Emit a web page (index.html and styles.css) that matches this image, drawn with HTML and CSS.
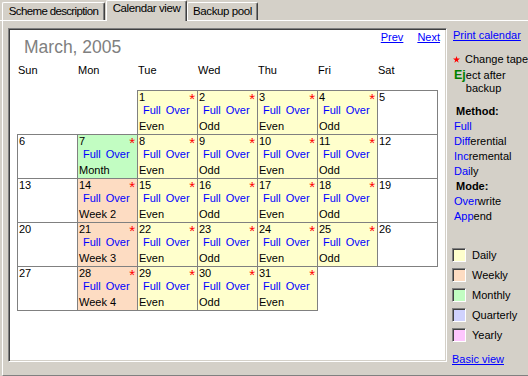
FILE: index.html
```html
<!DOCTYPE html>
<html lang="en">
<head>
    <meta charset="UTF-8">
    <title>Calendar view</title>
    <link rel="stylesheet" href="styles.css">
</head>
<body>
    <div class="tabs">
        <div class="tab tab-scheme">Scheme description</div>
        <div class="tab tab-active">Calendar view</div>
        <div class="tab tab-pool">Backup pool</div>
    </div>

    <div class="page">
        <div class="calendar">
            <div class="cal-top">
                <div class="month">March, 2005</div>
                <div class="cal-nav">
                    <a href="#">Prev</a>
                    <a href="#">Next</a>
                </div>
            </div>

            <div class="weekdays">
                <span>Sun</span><span>Mon</span><span>Tue</span><span>Wed</span><span>Thu</span><span>Fri</span><span>Sat</span>
            </div>

            <div class="days">
                <!-- week 1 -->
                <div class="day blank"></div>
                <div class="day blank"></div>
                <div class="day daily"><div class="day-top">1<span class="tape">*</span></div><div class="day-jobs"><span>Full</span><span>Over</span></div><div class="day-note">Even</div></div>
                <div class="day daily"><div class="day-top">2<span class="tape">*</span></div><div class="day-jobs"><span>Full</span><span>Over</span></div><div class="day-note">Odd</div></div>
                <div class="day daily"><div class="day-top">3<span class="tape">*</span></div><div class="day-jobs"><span>Full</span><span>Over</span></div><div class="day-note">Even</div></div>
                <div class="day daily"><div class="day-top">4<span class="tape">*</span></div><div class="day-jobs"><span>Full</span><span>Over</span></div><div class="day-note">Odd</div></div>
                <div class="day"><div class="day-top">5</div></div>

                <!-- week 2 -->
                <div class="day"><div class="day-top">6</div></div>
                <div class="day monthly"><div class="day-top">7<span class="tape">*</span></div><div class="day-jobs"><span>Full</span><span>Over</span></div><div class="day-note">Month</div></div>
                <div class="day daily"><div class="day-top">8<span class="tape">*</span></div><div class="day-jobs"><span>Full</span><span>Over</span></div><div class="day-note">Even</div></div>
                <div class="day daily"><div class="day-top">9<span class="tape">*</span></div><div class="day-jobs"><span>Full</span><span>Over</span></div><div class="day-note">Odd</div></div>
                <div class="day daily"><div class="day-top">10<span class="tape">*</span></div><div class="day-jobs"><span>Full</span><span>Over</span></div><div class="day-note">Even</div></div>
                <div class="day daily"><div class="day-top">11<span class="tape">*</span></div><div class="day-jobs"><span>Full</span><span>Over</span></div><div class="day-note">Odd</div></div>
                <div class="day"><div class="day-top">12</div></div>

                <!-- week 3 -->
                <div class="day"><div class="day-top">13</div></div>
                <div class="day weekly"><div class="day-top">14<span class="tape">*</span></div><div class="day-jobs"><span>Full</span><span>Over</span></div><div class="day-note">Week 2</div></div>
                <div class="day daily"><div class="day-top">15<span class="tape">*</span></div><div class="day-jobs"><span>Full</span><span>Over</span></div><div class="day-note">Even</div></div>
                <div class="day daily"><div class="day-top">16<span class="tape">*</span></div><div class="day-jobs"><span>Full</span><span>Over</span></div><div class="day-note">Odd</div></div>
                <div class="day daily"><div class="day-top">17<span class="tape">*</span></div><div class="day-jobs"><span>Full</span><span>Over</span></div><div class="day-note">Even</div></div>
                <div class="day daily"><div class="day-top">18<span class="tape">*</span></div><div class="day-jobs"><span>Full</span><span>Over</span></div><div class="day-note">Odd</div></div>
                <div class="day"><div class="day-top">19</div></div>

                <!-- week 4 -->
                <div class="day"><div class="day-top">20</div></div>
                <div class="day weekly"><div class="day-top">21<span class="tape">*</span></div><div class="day-jobs"><span>Full</span><span>Over</span></div><div class="day-note">Week 3</div></div>
                <div class="day daily"><div class="day-top">22<span class="tape">*</span></div><div class="day-jobs"><span>Full</span><span>Over</span></div><div class="day-note">Even</div></div>
                <div class="day daily"><div class="day-top">23<span class="tape">*</span></div><div class="day-jobs"><span>Full</span><span>Over</span></div><div class="day-note">Odd</div></div>
                <div class="day daily"><div class="day-top">24<span class="tape">*</span></div><div class="day-jobs"><span>Full</span><span>Over</span></div><div class="day-note">Even</div></div>
                <div class="day daily"><div class="day-top">25<span class="tape">*</span></div><div class="day-jobs"><span>Full</span><span>Over</span></div><div class="day-note">Odd</div></div>
                <div class="day"><div class="day-top">26</div></div>

                <!-- week 5 -->
                <div class="day"><div class="day-top">27</div></div>
                <div class="day weekly"><div class="day-top">28<span class="tape">*</span></div><div class="day-jobs"><span>Full</span><span>Over</span></div><div class="day-note">Week 4</div></div>
                <div class="day daily"><div class="day-top">29<span class="tape">*</span></div><div class="day-jobs"><span>Full</span><span>Over</span></div><div class="day-note">Even</div></div>
                <div class="day daily"><div class="day-top">30<span class="tape">*</span></div><div class="day-jobs"><span>Full</span><span>Over</span></div><div class="day-note">Odd</div></div>
                <div class="day daily"><div class="day-top">31<span class="tape">*</span></div><div class="day-jobs"><span>Full</span><span>Over</span></div><div class="day-note">Even</div></div>
            </div>
        </div>

        <div class="side">
            <a class="print-link" href="#">Print calendar</a>

            <div class="key-tape">
                <svg width="7" height="7" viewBox="0 0 10 10"><polygon points="5,0 6.2,3.6 10,3.6 6.9,5.9 8.1,9.6 5,7.3 1.9,9.6 3.1,5.9 0,3.6 3.8,3.6" fill="#ff0000"/></svg>
                <span>Change tape</span>
            </div>

            <div class="key-eject">
                <b>Ej</b>
                <span>ect after<br>backup</span>
            </div>

            <div class="key-head">Method:</div>
            <div class="key-item"><span class="hl">Full</span></div>
            <div class="key-item"><span class="hl">Diff</span>erential</div>
            <div class="key-item"><span class="hl">Inc</span>remental</div>
            <div class="key-item"><span class="hl">Dai</span>ly</div>
            <div class="key-head">Mode:</div>
            <div class="key-item"><span class="hl">Over</span>write</div>
            <div class="key-item"><span class="hl">App</span>end</div>

            <div class="legend">
                <div class="legend-row"><span class="swatch daily"></span>Daily</div>
                <div class="legend-row"><span class="swatch weekly"></span>Weekly</div>
                <div class="legend-row"><span class="swatch monthly"></span>Monthly</div>
                <div class="legend-row"><span class="swatch quarterly"></span>Quarterly</div>
                <div class="legend-row"><span class="swatch yearly"></span>Yearly</div>
            </div>

            <a class="basic-link" href="#">Basic view</a>
        </div>
    </div>
</body>
</html>
```

FILE: styles.css
```css
:root {
    --face: #d4d0c8;
    --shadow: #808080;
    --dark: #404040;
    --link: #0000ff;
    --daily: #ffffcc;
    --weekly: #fddcc2;
    --monthly: #c2fdc2;
    --quarterly: #d0d2fd;
    --yearly: #fdc6fd;
}

body {
    margin: 0;
    width: 528px;
    height: 376px;
    overflow: hidden;
    background-color: var(--face);
    font-family: 'Liberation Sans', Arial, sans-serif;
    font-size: 11px;
    color: #000;
}

a {
    color: var(--link);
}

/* tab strip */
.tabs {
    display: flex;
    align-items: flex-end;
    height: 21px;
    box-sizing: border-box;
    padding-left: 2px;
    border-bottom: 1px solid #fff;
}

.tab {
    height: 18px;
    box-sizing: border-box;
    padding-top: 2px;
    font-size: 11.5px;
    line-height: 13px;
    text-align: center;
    letter-spacing: -0.4px;
    border-top: 1px solid #fff;
    border-left: 1px solid #fff;
    border-right: 1px solid var(--dark);
    border-radius: 2px 2px 0 0;
    box-shadow: inset -1px 0 var(--shadow);
    background-color: var(--face);
}

.tab-scheme {
    width: 103px;
    margin-right: 1px;
    letter-spacing: -0.65px;
}

.tab-active {
    width: 81px;
    height: 21px;
    margin-bottom: -1px;
    padding-top: 1px;
}

.tab-pool {
    width: 71px;
}

/* page body */
.page {
    display: flex;
    height: 355px;
    box-sizing: border-box;
    margin-left: 2px;
    padding: 7px 0 0 5px;
    border-left: 1px solid #fff;
    border-bottom: 1px solid var(--shadow);
}

.calendar {
    width: 439px;
    height: 334px;
    box-sizing: border-box;
    padding: 1px;
    background: #fff;
    border: 1px solid;
    border-color: var(--shadow) #fff #fff var(--shadow);
    box-shadow: inset 1px 1px var(--dark), inset -1px -1px var(--face);
}

.cal-top {
    display: flex;
    justify-content: space-between;
    align-items: flex-start;
    padding: 1px 5px 0 14px;
}

.month {
    margin-top: 6px;
    font-size: 17.5px;
    line-height: 20px;
    color: var(--shadow);
}

.cal-nav {
    display: flex;
    gap: 14px;
    line-height: 13px;
}

.weekdays {
    display: grid;
    grid-template-columns: repeat(7, 60px);
    margin: 7px 0 0 7px;
    line-height: 13px;
}

.weekdays span {
    padding-left: 1px;
}

.days {
    display: grid;
    grid-template-columns: repeat(7, 60px);
    grid-auto-rows: 44px;
    margin: 13px 0 0 7px;
}

.day {
    width: 61px;
    height: 45px;
    box-sizing: border-box;
    border: 1px solid var(--shadow);
    background: #fff;
}

.day.blank {
    border: none;
    background: none;
}

.day.daily { background: var(--daily); }
.day.weekly { background: var(--weekly); }
.day.monthly { background: var(--monthly); }

.day-top {
    display: flex;
    justify-content: space-between;
    padding: 0 2px 0 1px;
    height: 12px;
    line-height: 12px;
}

.tape {
    color: #ff0000;
    font-size: 15px;
    line-height: 15px;
}

.day-jobs {
    padding-left: 5px;
    line-height: 15px;
    color: var(--link);
}

.day-jobs span + span {
    margin-left: 5px;
}

.day-note {
    padding-left: 1px;
    line-height: 16px;
}

/* right column */
.side {
    display: flex;
    flex-direction: column;
    align-items: flex-start;
    padding: 1px 0 0 5px;
    white-space: nowrap;
}

.print-link {
    margin-left: 1px;
    line-height: 13px;
}

.key-tape {
    display: flex;
    align-items: center;
    gap: 5px;
    margin-top: 10px;
    line-height: 15px;
}

.key-tape svg {
    margin-left: 1px;
}

.key-eject {
    display: flex;
    margin-top: 2px;
    padding-left: 2px;
    line-height: 13px;
}

.key-eject b {
    color: #008000;
    font-size: 12.5px;
}

.key-head {
    padding-left: 4px;
    font-weight: bold;
    line-height: 15px;
}

.key-eject + .key-head {
    margin-top: 9px;
}

.key-item {
    padding-left: 2px;
    line-height: 15px;
}

.hl {
    color: var(--link);
}

.legend {
    margin-top: 21px;
}

.legend-row {
    display: flex;
    align-items: center;
    gap: 6px;
    height: 20px;
    line-height: 20px;
}

.swatch {
    width: 14px;
    height: 14px;
    box-sizing: border-box;
    border: 1px solid;
    border-color: var(--shadow) #fff #fff var(--shadow);
    box-shadow: inset 1px 1px var(--dark);
}

.swatch.daily { background: var(--daily); }
.swatch.weekly { background: var(--weekly); }
.swatch.monthly { background: var(--monthly); }
.swatch.quarterly { background: var(--quarterly); }
.swatch.yearly { background: var(--yearly); }

.basic-link {
    margin-top: 8px;
    line-height: 13px;
}
```
